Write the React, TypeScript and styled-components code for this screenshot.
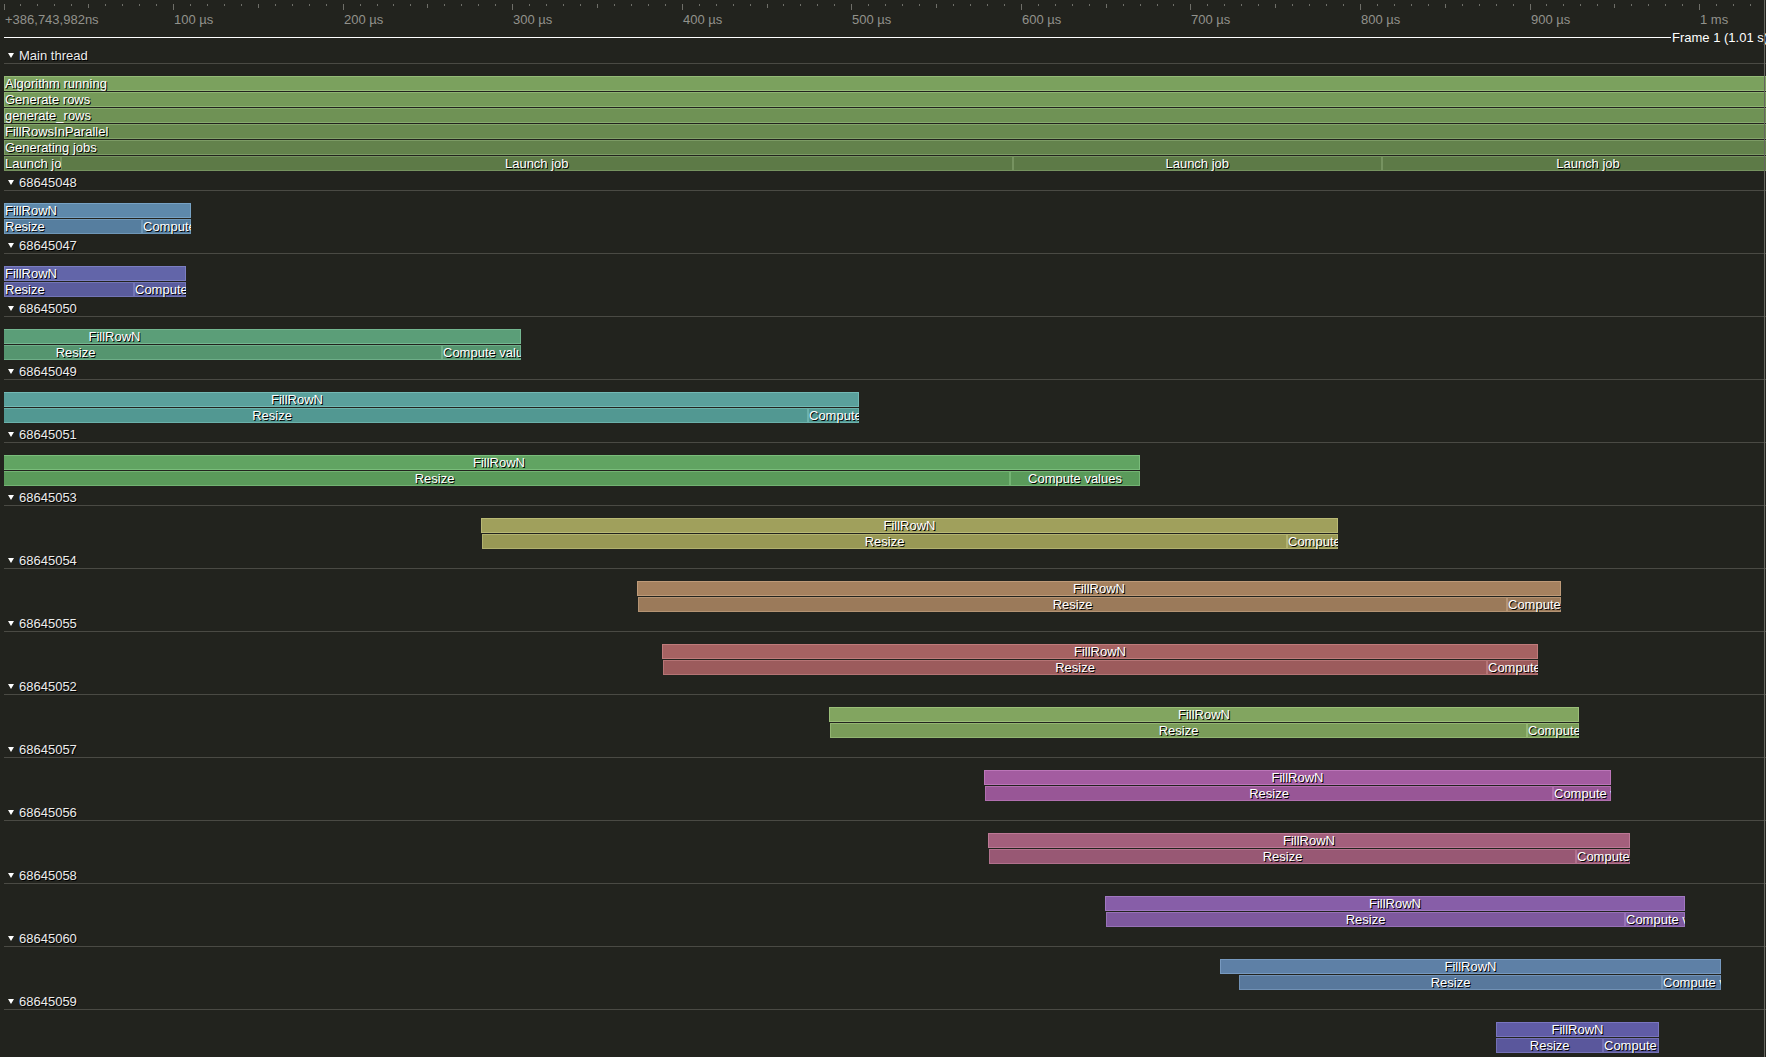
import styled, { createGlobalStyle } from "styled-components"

const GlobalStyle = createGlobalStyle`
  html, body {
    margin: 0;
    padding: 0;
    background: #22231e;
    overflow: hidden;
  }
  body {
    font-family: "Liberation Sans", Arial, sans-serif;
    font-size: 13px;
    color: #ffffff;
  }
`

// window x of t = 0, and pixels per 10 µs
const ORIGIN = 4
const STEP = 16.956

const Page = styled.div`
    position: relative;
    width: 1766px;
    height: 1057px;
    padding-left: ${ORIGIN}px;
    box-sizing: border-box;
    overflow: hidden;
`
const Ruler = styled.div`
    position: relative;
    height: 26px;
    padding-top: 4px;
    svg{
        display: block;
    }
`
const TickLabel = styled.span`
    position: absolute;
    top: 13px;
    line-height: 14px;
    color: #92928c;
    white-space: nowrap;
`
const FrameRow = styled.div`
    display: flex;
    align-items: center;
    height: 15px;
    margin-bottom: 4px;
    overflow: hidden;
    white-space: nowrap;
`
const FrameLine = styled.div`
    flex: 0 0 1667px;
    height: 1px;
    background: #ffffff;
`
const FrameLabel = styled.span`
    line-height: 14px;
    color: #ffffff;
    padding-left: 1px;
`
const EdgeLine = styled.div`
    position: absolute;
    top: 0;
    left: 1764px;
    width: 1px;
    height: 100%;
    background: #66665f;
`
const ThreadHeader = styled.div`
    display: flex;
    align-items: center;
    gap: 5px;
    height: 14px;
    padding-left: 4px;
    border-bottom: 1px solid #4a4a44;
    line-height: 14px;
    color: #ececec;
    text-shadow: 1px 1px 0 #000;
`
const Caret = styled.span`
    width: 0;
    height: 0;
    margin-top: -2px;
    border-left: 3px solid transparent;
    border-right: 3px solid transparent;
    border-top: 5px solid #ffffff;
`
const ZoneArea = styled.div`
    padding: 12px 0 4px;
`
const Track = styled.div`
    position: relative;
    height: 16px;
    overflow: hidden;
`
const Zone = styled.div<{ $fill: string; $edge: string; $left?: boolean }>`
    position: absolute;
    top: 0;
    height: 15px;
    box-sizing: border-box;
    padding-top: 1px;
    border: 1px solid ${p => p.$edge};
    background: ${p => p.$fill};
    display: flex;
    justify-content: ${p => (p.$left ? "flex-start" : "safe center")};
    overflow: clip;
    overflow-clip-margin: 1px;
    white-space: nowrap;
    line-height: 12px;
    color: #ffffff;
    text-shadow: 1px 1px 0 #000;
`

function lighten(hex: string, amt = 25) {
    const n = parseInt(hex.slice(1), 16)
    const c = [(n >> 16) & 255, (n >> 8) & 255, n & 255].map(v => Math.min(255, v + amt))
    return `rgb(${c[0]},${c[1]},${c[2]})`
}

type Z = [number, number, string, boolean?]
type Thread = { name: string; colors: string[]; rows: Z[][] }

const FR = "FillRowN"
const RS = "Resize"
const CV = "Compute values"

function job(a: number, e: number, split: number, colors: string[], name: string, rs = a + 1, left = false): Thread {
    return {
        name,
        colors,
        rows: [
            [[a, e, FR, left]],
            [[rs, split, RS, left], [split, e, CV]],
        ],
    }
}

const mainThread: Thread = {
    name: "Main thread",
    colors: ["#7ba15e", "#759a59", "#6f9255", "#698a50", "#63824c", "#5d7a47"],
    rows: [
        [[4, 1800, "Algorithm running", true]],
        [[4, 1800, "Generate rows", true]],
        [[4, 1800, "generate_rows", true]],
        [[4, 1800, "FillRowsInParallel", true]],
        [[4, 1800, "Generating jobs", true]],
        [[4, 61, "Launch job", true], [61, 1012.5, "Launch job"], [1012.5, 1382, "Launch job"], [1382, 1794, "Launch job"]],
    ],
}

const threads: Thread[] = [
    mainThread,
    job(4, 190.6, 142, ["#5e89ab", "#567e9f"], "68645048", 4, true),
    job(4, 186, 134, ["#6265a9", "#5a5c9d"], "68645047", 4, true),
    job(-292, 521, 442, ["#5b9e78", "#55956f"], "68645050"),
    job(-265, 859, 808, ["#5aa09c", "#529892"], "68645049"),
    job(-142, 1140, 1010, ["#61a462", "#5a9a5a"], "68645051"),
    job(481, 1338, 1287, ["#a0a05c", "#989855"], "68645053"),
    job(637, 1561, 1507, ["#a5815f", "#9b7a5a"], "68645054"),
    job(662, 1538, 1487, ["#a66262", "#9c5b5c"], "68645055"),
    job(829, 1579, 1527, ["#82a560", "#7a9c59"], "68645052"),
    job(984, 1611, 1553, ["#a35ca0", "#985696"], "68645057"),
    job(988, 1630, 1576, ["#a35f7c", "#985874"], "68645056"),
    job(1105, 1685, 1625, ["#875ea8", "#7e589e"], "68645058"),
    job(1220, 1721, 1662, ["#5e80a6", "#58789c"], "68645060", 1239),
    job(1496, 1659, 1603, ["#605ca6", "#5a579c"], "68645059", 1496.3),
]

const labels = ["+386,743,982ns", "100 µs", "200 µs", "300 µs", "400 µs", "500 µs", "600 µs", "700 µs", "800 µs", "900 µs", "1 ms"]

function TimeRuler() {
    const ticks = Array.from({ length: 105 }, (_, i) => i)
    return (
        <Ruler>
            <svg width={1762} height={8}>
                {ticks.map(i => {
                    const x = Math.floor(i * STEP) + 0.5
                    const h = i % 10 === 0 ? 6 : i % 5 === 0 ? 4 : 2
                    return <line key={i} x1={x} x2={x} y1={0} y2={h} stroke="#6e6e68" strokeWidth={1} />
                })}
            </svg>
            {labels.map((l, i) => (
                <TickLabel key={l} style={{ left: Math.floor(i * STEP * 10) + 1 }}>{l}</TickLabel>
            ))}
        </Ruler>
    )
}

function ThreadBlock({ t }: { t: Thread }) {
    return (
        <>
            <ThreadHeader>
                <Caret />
                <span>{t.name}</span>
            </ThreadHeader>
            <ZoneArea>
                {t.rows.map((row, d) => {
                    const fill = t.colors[Math.min(d, t.colors.length - 1)]
                    return (
                        <Track key={d}>
                            {row.map(([s, e, name, left], k) => (
                                <Zone
                                    key={k}
                                    $fill={fill}
                                    $edge={lighten(fill)}
                                    $left={left}
                                    style={{ left: s - ORIGIN, width: e - s }}
                                >
                                    {name}
                                </Zone>
                            ))}
                        </Track>
                    )
                })}
            </ZoneArea>
        </>
    )
}

export default function App() {
    return (
        <>
            <GlobalStyle />
            <Page>
                <TimeRuler />
                <FrameRow>
                    <FrameLine />
                    <FrameLabel>Frame 1 (1.01 s)</FrameLabel>
                </FrameRow>
                {threads.map(t => (
                    <ThreadBlock key={t.name} t={t} />
                ))}
                <EdgeLine />
            </Page>
        </>
    )
}
